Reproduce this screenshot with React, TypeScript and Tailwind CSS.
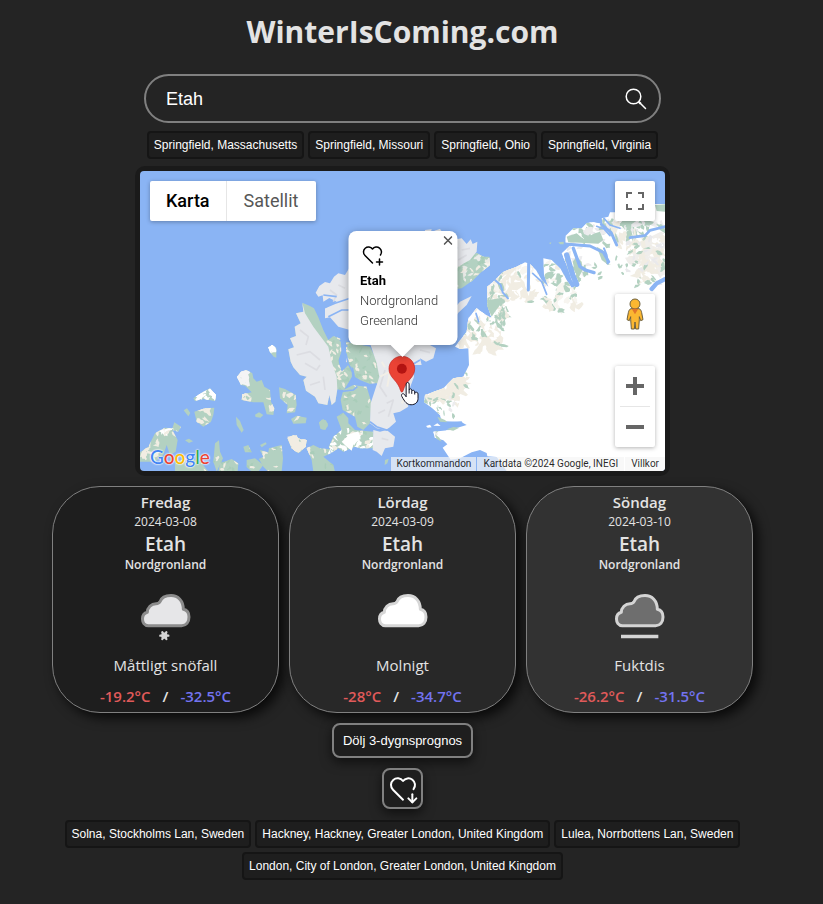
import { useState } from "react";
import type { ReactNode } from "react";
import { TbHeartDown, TbHeartPlus } from "react-icons/tb";

const UI_FONT = "font-['Open_Sans','Noto_Sans',sans-serif]";
const BUTTON_FONT = "font-['Liberation_Sans',Arial,sans-serif]";
const MAP_FONT = "font-['Roboto',sans-serif]";

const suggestions = [
  "Springfield, Massachusetts",
  "Springfield, Missouri",
  "Springfield, Ohio",
  "Springfield, Virginia",
];

const favourites = [
  "Solna, Stockholms Lan, Sweden",
  "Hackney, Hackney, Greater London, United Kingdom",
  "Lulea, Norrbottens Lan, Sweden",
  "London, City of London, Greater London, United Kingdom",
];

type Weather = "snow" | "cloudy" | "mist";

const forecast: {
  day: string;
  date: string;
  weather: Weather;
  text: string;
  max: string;
  min: string;
  background: string;
}[] = [
  { day: "Fredag", date: "2024-03-08", weather: "snow", text: "Måttligt snöfall", max: "-19.2°C", min: "-32.5°C", background: "bg-[#1e1e1e]" },
  { day: "Lördag", date: "2024-03-09", weather: "cloudy", text: "Molnigt", max: "-28°C", min: "-34.7°C", background: "bg-[#282828]" },
  { day: "Söndag", date: "2024-03-10", weather: "mist", text: "Fuktdis", max: "-26.2°C", min: "-31.5°C", background: "bg-[#323232]" },
];

function PlaceButton({ children }: { children: ReactNode }) {
  return (
    <button
      type="button"
      className={`h-7 rounded border-2 border-[#151515] bg-[#1e1e1e] px-[5px] text-xs font-medium whitespace-nowrap text-white ${BUTTON_FONT}`}
    >
      {children}
    </button>
  );
}

const cloudColours = {
  snow: { fill: "#e6e6e8", stroke: "#8c8c8c" },
  cloudy: { fill: "#ffffff", stroke: "#d6d6d6" },
  mist: { fill: "#6e6e6e", stroke: "#d4d4d4" },
};

function WeatherIcon({ weather }: { weather: Weather }) {
  const { fill, stroke } = cloudColours[weather];
  return (
    <svg viewBox="280 309 192 192" className="size-16" aria-hidden="true">
      <path
        d="M323 437C311 437 305.500 427 305.500 417C305.500 406 311 399 320 397C320 383 332 371 346 371C353 371 356 369 358 365C362 354 374 346.500 391 346.500C412 346.500 428 362 428 388C439 390 445 399 445 411C445 427 436 437 423 437Z"
        fill={fill}
        stroke={stroke}
        strokeWidth="9"
        strokeLinejoin="round"
      />
      {weather === "snow" && (
        <g stroke="#d6d6d6" strokeWidth="7" strokeLinecap="round">
          <path d="M359 467h24M365 457l12 20M377 457l-12 20" />
          <circle cx="371" cy="467" r="6" fill="#d6d6d6" />
        </g>
      )}
      {weather === "mist" && <path d="M319 469.500h112" stroke="#d4d4d4" strokeWidth="11" />}
    </svg>
  );
}

/* Coastlines, in a 1575 x 900 space (three units to a map pixel). */
const GREENLAND =
  "M205 550L207 600L190 635L160 640L130 670L75 690L72 712L95 728L120 750L125 768L185 772L200 780L150 795L100 800L104 818L130 826L142 838L128 848L152 884L180 880L215 862L240 855L260 864L262 874L290 876L320 918H800V117H765L740 135L720 125L700 150L655 142L630 142L625 155L605 160L608 176L580 172L560 174L545 190L520 190L497 212L497 235L512 240L485 265L500 300L515 345L530 362L515 368L500 345L482 312L455 285L430 280L432 330L445 365L425 345L408 315L390 297L375 292L350 305L310 320L285 345L262 365L262 420L275 460L250 445L230 430L205 460L200 500L165 545L180 552Z";

const westIslands = [
  "M306 185L318 170L335 165L352 175L355 190L365 200L380 195L388 215L405 225L408 260L418 280L415 300L395 298L385 262L355 262L335 258L320 255L322 238L350 232L330 212L318 210Z",
  "M400 97L412 90L424 100L424 128L416 125L405 112Z",
  "M175 250L205 230L225 220L243 240L240 258L205 252L180 258Z",
  "M178 290L210 280L238 278L235 300L228 320L205 335L185 320Z",
  "M146 286L156 280L166 294L160 304Z",
  "M432 217L450 222L482 240L485 270L480 292L455 295L458 270L435 250Z",
  "M360 299L372 292L385 300L376 308L362 306Z",
  "M303 305L315 318L326 345L320 353L305 330Z",
  "M468 312L485 302L515 308L512 325L475 326Z",
  "M552 322L565 312L579 326L572 344L560 343Z",
  "M10 415L40 395L60 355L90 338L112 340L118 322L138 335L130 350L112 345L128 375L122 410L105 420L95 390L85 420L60 440H10Z",
  "M150 376L162 371L174 379L162 384Z",
  "M240 385L252 376L255 410L264 430L245 470L235 440Z",
  "M255 445L290 432L310 445L308 470H250Z",
  "M325 395L340 390L350 412L330 412Z",
  "M372 432L385 425L375 405L400 412L402 400L440 390L444 430L440 470H400L385 455Z",
  "M335 435L360 430L385 450L370 470H350L335 455Z",
  "M375 390L392 382L395 387L380 397Z",
  "M120 445L160 425L200 445L220 470H120Z",
  "M457 370L475 360L495 372L515 375L512 395L490 415L470 400Z",
];

const centralIslands = [
  "M97 218L120 228L132 235L145 262L160 300L175 330L190 318L212 326L214 365L205 392L215 425L244 395L246 440L222 480L202 478L196 515L185 525L178 495L172 525L145 520L135 500L108 482L100 450L110 440L90 435L70 412L62 395L55 358L72 352L60 325L78 318L74 290L92 280L78 250L100 245Z",
  "M228 335L250 340L300 350L325 400L330 460L300 462L270 450L255 440L250 415L228 395Z",
  "M220 480L250 465L290 470L305 520L300 580L280 600L262 590L255 560L218 540L212 510Z",
  "M200 560L220 548L235 565L235 580L255 600L310 605V655L270 655L255 650L220 665L205 655L185 668L176 650L190 620L215 600Z",
  "M147 578L155 569L168 571L174 588L163 599L151 596Z",
  "M110 655L130 645L150 655L180 658L182 670L160 680L190 705L195 725H130L125 690Z",
  "M558 110L620 68L640 80L658 80L660 105L630 130L610 150L575 175L540 180Z",
  "M345 690L356 686L352 700L344 705Z",
];

const iceFields = [
  "M97 218L105 250L130 290L175 350L185 395L200 440L202 478L196 515L185 525L178 495L172 525L145 520L135 500L108 482L100 450L110 440L90 435L70 412L62 395L55 358L72 352L60 325L78 318L74 290L92 280L78 250L100 245Z",
  "M137 188L148 168L165 156L180 160L192 140L205 130L225 135L240 110V300L205 290L180 262L165 265L165 235L200 215L178 204L160 215L158 196L145 200Z",
  "M300 340H470L498 355L490 385L468 395L450 385L455 405L430 405L432 440L410 500L415 530L390 545L370 550L378 575L350 600L320 595L300 580L302 520L328 440L320 400Z",
  "M540 100L562 55L558 28L575 25L590 42L602 28L608 42L622 35L620 65L600 90L555 115Z",
  "M540 250L570 215L605 198L590 225L565 248L550 270Z",
  "M310 600L330 605L350 600L375 620L370 650L345 655L335 678L320 665L308 660Z",
];

const fjords: [string, number][] = [
  ["M495 237L570 243L610 262L626 290", 9],
  ["M520 250L540 305L556 315L582 323", 10],
  ["M604 178L634 204L650 240", 9],
  ["M755 372L770 355L800 340", 13],
  ["M690 218L735 212L750 196L800 184", 8],
  ["M386 296L385 375", 9],
  ["M398 325L425 350L440 388", 5],
  ["M285 345L302 360L308 382L324 400", 6],
  ["M590 184L612 192L630 212M612 160L630 180L660 190", 5],
  ["M500 270L518 330L530 358", 16],
  ["M612 250L620 270L623 295", 6],
  ["M228 445L236 470", 5],
];

const GREEN = "#b3d1c1";
const CREAM = "#f1ede3";

/* Centre, spread, number of patches and the colours that they take in turn. */
const terrain: { at: [number, number]; spread: [number, number]; count: number; size: number; colours: string[] }[] = [
  { at: [1100, 330], spread: [75, 55], count: 50, size: 24, colours: [CREAM, CREAM, "#f7f5f0"] },
  { at: [1120, 340], spread: [95, 60], count: 34, size: 13, colours: [GREEN, "#ffffff", CREAM] },
  { at: [1070, 390], spread: [35, 55], count: 30, size: 16, colours: [GREEN, GREEN, CREAM] },
  { at: [1265, 345], spread: [55, 75], count: 60, size: 16, colours: [GREEN, CREAM, "#f7f5f0", GREEN] },
  { at: [1305, 270], spread: [40, 45], count: 24, size: 13, colours: [GREEN, "#ececee", "#ffffff"] },
  { at: [1370, 180], spread: [115, 40], count: 50, size: 18, colours: [GREEN, "#e9e9ec", "#ffffff"] },
  { at: [1490, 190], spread: [100, 35], count: 46, size: 18, colours: [GREEN, "#ececee", CREAM, GREEN] },
  { at: [1535, 260], spread: [55, 65], count: 50, size: 24, colours: [CREAM, CREAM, "#f0eeeb"] },
  { at: [1520, 270], spread: [65, 75], count: 46, size: 12, colours: [GREEN, "#ffffff", "#e9e9ec"] },
  { at: [1430, 290], spread: [80, 35], count: 24, size: 9, colours: [GREEN, "#ffffff"] },
  { at: [1010, 470], spread: [65, 70], count: 60, size: 24, colours: [CREAM, CREAM, "#ffffff"] },
  { at: [1035, 450], spread: [60, 75], count: 50, size: 13, colours: [GREEN, GREEN, "#ffffff"] },
  { at: [905, 650], spread: [65, 40], count: 60, size: 24, colours: [CREAM] },
  { at: [905, 650], spread: [75, 50], count: 24, size: 11, colours: [GREEN, "#ffffff"] },
  { at: [890, 740], spread: [55, 60], count: 34, size: 10, colours: [GREEN, "#ececee", "#ffffff"] },
  { at: [650, 540], spread: [90, 90], count: 54, size: 10, colours: [CREAM, "#a9cdb9"] },
  { at: [590, 560], spread: [30, 130], count: 30, size: 10, colours: [CREAM] },
  { at: [640, 690], spread: [80, 130], count: 54, size: 9, colours: [CREAM, "#a9cdb9"] },
  { at: [990, 300], spread: [60, 50], count: 60, size: 11, colours: [CREAM, "#e9ebe8", "#a9cdb9"] },
  { at: [630, 810], spread: [75, 35], count: 50, size: 12, colours: ["#ffffff", CREAM, "#ffffff"] },
  { at: [440, 690], spread: [50, 60], count: 22, size: 13, colours: [CREAM] },
  { at: [470, 810], spread: [40, 30], count: 35, size: 20, colours: [CREAM] },
  { at: [185, 735], spread: [45, 30], count: 14, size: 15, colours: [CREAM] },
  { at: [300, 620], spread: [25, 25], count: 26, size: 16, colours: ["#f4f4f5"] },
  { at: [310, 680], spread: [20, 14], count: 10, size: 14, colours: [CREAM] },
  { at: [200, 675], spread: [30, 14], count: 14, size: 15, colours: ["#ffffff"] },
  { at: [390, 530], spread: [16, 16], count: 14, size: 14, colours: ["#ffffff"] },
  { at: [90, 775], spread: [45, 14], count: 14, size: 13, colours: [CREAM, "#ffffff"] },
  { at: [20, 840], spread: [35, 30], count: 14, size: 13, colours: [CREAM] },
  { at: [350, 865], spread: [240, 40], count: 70, size: 10, colours: [CREAM, "#a9cdb9"] },
];

function buildTerrain() {
  let seed = 4711;
  const random = () => {
    seed = (seed * 16807) % 2147483647;
    return seed / 2147483647;
  };
  return terrain.flatMap(({ at, spread, count, size, colours }) =>
    Array.from({ length: count }, (_, i) => {
      const x = at[0] + (random() * 2 - 1) * spread[0];
      const y = at[1] + (random() * 2 - 1) * spread[1];
      const turn = random() * Math.PI;
      const flatness = 0.3 + random() * 0.35;
      const points = Array.from({ length: 9 }, (_, k) => {
        const angle = (k / 9) * Math.PI * 2;
        const radius = size * (0.4 + random() * 0.8);
        const along = Math.cos(angle) * radius;
        const across = Math.sin(angle) * radius * flatness;
        const px = x + along * Math.cos(turn) - across * Math.sin(turn);
        const py = y + along * Math.sin(turn) + across * Math.cos(turn);
        return `${Math.round(px)},${Math.round(py)}`;
      }).join(" ");
      return { points, fill: colours[i % colours.length] };
    }),
  );
}

const patches = buildTerrain();

function MapDrawing() {
  return (
    <svg
      viewBox="0 0 1575 900"
      preserveAspectRatio="xMidYMid slice"
      className="absolute inset-0 size-full"
      role="img"
      aria-label="Karta över nordvästra Grönland"
    >
      <defs>
        <clipPath id="land">
          <path d={GREENLAND} transform="translate(780 -18)" />
          {westIslands.map((d) => (
            <path key={d} d={d} transform="translate(-15 432)" />
          ))}
          {centralIslands.map((d) => (
            <path key={d} d={d} transform="translate(390 177)" />
          ))}
        </clipPath>
      </defs>
      <rect width="1575" height="900" fill="#8ab4f4" />
      <path d={GREENLAND} transform="translate(780 -18)" fill="#ffffff" />
      <g transform="translate(-15 432)" fill={GREEN}>
        {westIslands.map((d) => (
          <path key={d} d={d} />
        ))}
      </g>
      <g transform="translate(390 177)" fill={GREEN}>
        {centralIslands.map((d) => (
          <path key={d} d={d} />
        ))}
      </g>
      <g clipPath="url(#land)">
        {patches.map(({ points, fill }, i) => (
          <polygon key={i} points={points} fill={fill} />
        ))}
      </g>
      <g transform="translate(390 177)">
        <g fill="#e7e9ed">
          {iceFields.map((d) => (
            <path key={d} d={d} />
          ))}
          <path d="M215 635L240 612L265 604L272 625L250 645L245 662L230 650Z" fill="#ffffff" />
          <path d="M52 620L80 615L90 640L86 668L66 655Z" fill={CREAM} />
        </g>
        <g fill="none" stroke="#dcdde2" strokeWidth="5" strokeLinejoin="round">
          <path d="M90 300L115 320L108 345M80 375L120 365L150 390M105 400L140 420L150 405M160 440L165 480M120 465L150 455M345 420L330 470L350 500M350 520L370 510L355 560M325 550L345 540M180 180L200 195L190 215M205 165L225 175M380 365L400 380M450 360L480 368" />
          <path d="M575 60L600 55M565 90L590 75M335 625L355 630" />
        </g>
        <g fill="none" stroke="#f2efe7" strokeWidth="6">
          <path d="M330 440L360 425L352 470M335 395L345 412M395 520L405 505" />
        </g>
        <g fill="none" stroke="#8ab4f4" strokeWidth="5">
          <path d="M160 235L195 220L240 205M175 260L215 240L240 240M228 370L234 400L250 430L246 460L280 466L320 462M210 330L232 350M300 575L320 590L350 600L375 590M262 470L250 480L215 484M425 405L450 390M160 195L200 200" />
        </g>
      </g>
      <g transform="translate(780 -18)">
        <g fill="#e6e7ea">
          <path d="M75 195L95 193L93 200H75ZM103 197L120 192L126 200H105Z" />
          <path d="M502 262L512 258L508 310L500 300Z" />
        </g>
        <path d="M262 405L285 402L305 398L315 410L300 420L285 440L275 455L262 425Z" fill={GREEN} />
        <path d="M530 275L545 290L548 315L535 340L525 320L518 290Z" fill={GREEN} />
        <path d="M500 215L530 205L550 222L585 205L600 200L610 225L595 236L540 233L505 232Z" fill={GREEN} />
        <path d="M590 245L608 255L625 300L605 285Z" fill={GREEN} />
        <path d="M765 120L795 118V140L770 138Z" fill={GREEN} />
        <path d="M475 232L490 230L494 238H480ZM447 234L454 232L452 238Z" fill={GREEN} />
        <path d="M555 190L575 186L580 205L560 210Z" fill="#ececed" />
        <g fill="none" stroke="#8ab4f4" strokeLinejoin="round" strokeLinecap="round">
          {fjords.map(([d, width]) => (
            <path key={d} d={d} strokeWidth={width} />
          ))}
        </g>
      </g>
      <g transform="translate(780 432)">
        <path d="M78 333L90 329L95 337L83 338ZM100 332L112 325L122 333Z" fill="#ffffff" />
        <path d="M125 322L185 319L190 330L150 338L140 334Z" fill="#8ab4f4" />
        <path d="M112 305L135 315L142 322L120 320ZM140 343L160 336L178 338L160 347ZM105 358L118 368L125 380L110 372Z" fill={GREEN} />
      </g>
    </svg>
  );
}

function Pegman() {
  return (
    <svg viewBox="0 0 54 96" className="h-8 w-[18px]" aria-hidden="true">
      <g fill="#fbb731" stroke="#6b5f3f" strokeWidth="3">
        <path d="M15 32H39C43 33 46 38 47 44L51 65L44 68L40 56V64L38 93H29L27 72L25 93H16L14 64V56L10 68L3 65L7 44C8 38 11 33 15 32Z" />
        <circle cx="27" cy="18" r="15" />
      </g>
      <path d="M17 32H37L27 49Z" fill="#e0752b" />
    </svg>
  );
}

function MapMarker() {
  return (
    <svg viewBox="354 375 100 156" className="block h-[52px] w-[33px]" aria-hidden="true">
      <path
        d="M396 378C374 378 357 395 357 416C357 429 363 438 371 447C383 460 389 471 392 482C393 488 399 488 400 482C403 471 409 460 421 447C429 438 435 429 435 416C435 395 418 378 396 378Z"
        fill="#ea4335"
        stroke="#c5221f"
        strokeWidth="2"
      />
      <circle cx="396" cy="416" r="15" fill="#b31412" />
      <path
        d="M409 496V462C409 456 418 456 418 462V480C419 475 426 476 426 481V484C428 479 435 481 435 486V489C438 485 445 487 445 492V506C445 517 437 525 424 525C411 525 405 516 396 500C392 492 400 489 404 494L409 501Z"
        fill="#ffffff"
        stroke="#111122"
        strokeWidth="3"
        strokeLinejoin="round"
      />
      <path d="M418 480V491M426 484V492M435 488V494" stroke="#111122" strokeWidth="3" />
    </svg>
  );
}

const controlBox = "bg-white shadow-[0_1px_4px_rgba(0,0,0,0.3)]";

function GoogleLogo() {
  return (
    <a
      href="#google"
      aria-label="Google"
      className="font-['Lato',sans-serif] text-[19px] leading-6 font-medium [text-shadow:0_0_2px_#fff,0_0_2px_#fff,0_0_1px_#fff]"
    >
      <span className="text-[#4285f4]">G</span>
      <span className="text-[#ea4335]">o</span>
      <span className="text-[#fbbc05]">o</span>
      <span className="text-[#4285f4]">g</span>
      <span className="text-[#34a853]">l</span>
      <span className="text-[#ea4335]">e</span>
    </a>
  );
}

function MapPanel() {
  return (
    <section className="mt-[7px] w-full max-w-[535px] rounded-[10px] bg-[#1a1a1a] p-[5px]" aria-label="Karta">
      <div className={`relative h-[300px] overflow-hidden rounded-[4px] ${MAP_FONT}`}>
        <MapDrawing />

        <div className={`absolute top-[10px] left-[10px] flex h-10 rounded-[2px] text-lg ${controlBox}`}>
          <button type="button" className="border-r border-[#e6e6e6] px-4 font-medium text-black">
            Karta
          </button>
          <button type="button" className="px-[17px] text-[#565656]">
            Satellit
          </button>
        </div>

        <button
          type="button"
          aria-label="Växla till helskärm"
          className={`absolute top-[10px] right-[10px] flex size-10 items-center justify-center rounded-[2px] ${controlBox}`}
        >
          <svg viewBox="0 0 18 18" className="size-[18px]" fill="#666666" aria-hidden="true">
            <path d="M0 0v6h2V2h4V0H0zm16 0h-4v2h4v4h2V0h-2zm0 16h-4v2h6v-6h-2v4zM2 12H0v6h6v-2H2v-4z" />
          </svg>
        </button>

        <div className="absolute right-[10px] bottom-6 flex w-10 flex-col gap-8">
          <button type="button" aria-label="Street View" className={`flex h-10 items-center justify-center rounded-[2px] ${controlBox}`}>
            <Pegman />
          </button>
          <div className={`flex flex-col items-center rounded-[2px] ${controlBox}`}>
            <button type="button" aria-label="Zooma in" className="flex size-10 items-center justify-center">
              <svg viewBox="0 0 18 18" className="size-[18px]" fill="#666666" aria-hidden="true">
                <path d="M18 7h-7V0H7v7H0v4h7v7h4v-7h7z" />
              </svg>
            </button>
            <span className="h-px w-[30px] bg-[#e6e6e6]" />
            <button type="button" aria-label="Zooma ut" className="flex size-10 items-center justify-center">
              <svg viewBox="0 0 18 18" className="size-[18px]" fill="#666666" aria-hidden="true">
                <path d="M0 7h18v4H0V7z" />
              </svg>
            </button>
          </div>
        </div>

        <div className="absolute top-[184px] left-1/2 -ml-[15px]">
          <MapMarker />
        </div>

        <div className="absolute top-[60px] left-1/2 w-[109px] -translate-x-1/2 drop-shadow-[0_2px_4px_rgba(0,0,0,0.35)]">
          <div className="h-[114px] rounded-lg bg-white px-3 pt-3 text-[13px] leading-5 font-light text-[#333333]">
            <button type="button" aria-label="Spara som favorit" className="mb-1 block text-black">
              <TbHeartPlus className="size-6 [stroke-width:1.5]" />
            </button>
            <p className="font-bold text-black">Etah</p>
            <p>Nordgronland</p>
            <p>Greenland</p>
          </div>
          <button type="button" aria-label="Stäng" className="absolute top-[4px] right-[4px] p-px">
            <svg viewBox="0 0 9 9" className="size-[9px]" stroke="#555555" strokeWidth="1.500" aria-hidden="true">
              <path d="M0.500 0.500l8 8M8.500 0.500l-8 8" />
            </svg>
          </button>
          <svg viewBox="0 0 24 12" className="mx-auto block h-3 w-6" aria-hidden="true">
            <path d="M0 0h24L12 12z" fill="#ffffff" />
          </svg>
        </div>

        <div className="absolute bottom-0 left-[10px]">
          <GoogleLogo />
        </div>

        <div className="absolute right-0 bottom-0 flex h-[14px] gap-px text-[10px] leading-[14px] text-black/85">
          <button type="button" className="bg-[#f5f5f5]/70 px-[5px]">
            Kortkommandon
          </button>
          <span className="bg-[#f5f5f5]/70 px-[6px]">Kartdata ©2024 Google, INEGI</span>
          <a href="#villkor" className="bg-[#f5f5f5]/70 px-[6px]">
            Villkor
          </a>
        </div>
      </div>
    </section>
  );
}

export default function App() {
  const [query, setQuery] = useState("Etah");
  return (
    <main className={`flex min-h-screen flex-col items-center bg-[#242424] pr-[18px] text-[#e3e3e3] ${UI_FONT}`}>
      <h1 className="pt-2 text-[30px] leading-[48px] font-bold">WinterIsComing.com</h1>

      <form
        role="search"
        onSubmit={(event) => event.preventDefault()}
        className="mt-[18px] flex h-[49px] w-full max-w-[517px] items-center rounded-full border-2 border-[#808080] pr-3 pl-5"
      >
        <input
          type="text"
          aria-label="Sök ort"
          value={query}
          onChange={(event) => setQuery(event.target.value)}
          className={`min-w-0 flex-1 bg-transparent text-lg text-white outline-none ${BUTTON_FONT}`}
        />
        <button type="submit" aria-label="Sök" className="text-white">
          <svg viewBox="0 0 22 22" className="size-[22px]" fill="none" stroke="currentColor" aria-hidden="true">
            <circle cx="8.500" cy="8.500" r="7.300" strokeWidth="1.500" />
            <path d="M13.700 13.700l2 2" strokeWidth="2.200" />
            <path d="M15 15l5.500 5.500" strokeWidth="1.500" strokeLinecap="round" />
          </svg>
        </button>
      </form>

      <div className="mt-2 flex flex-wrap justify-center gap-1">
        {suggestions.map((place) => (
          <PlaceButton key={place}>{place}</PlaceButton>
        ))}
      </div>

      <MapPanel />

      <div className="mt-[10px] grid w-full max-w-[701px] grid-cols-3 gap-[10px]">
        {forecast.map((item) => (
          <article
            key={item.day}
            className={`flex flex-col items-center rounded-[48px] border border-[#808080] pt-1 pb-[6px] shadow-[5px_5px_12px_rgba(0,0,0,0.75)] ${item.background}`}
          >
            <h2 className="text-[15px] leading-[22px] font-semibold">{item.day}</h2>
            <time className="text-[12px] leading-[18px]">{item.date}</time>
            <p className="text-[19px] leading-[26px] font-semibold">Etah</p>
            <p className="text-[12px] leading-4 font-semibold">Nordgronland</p>
            <div className="pt-[10px] pb-2">
              <WeatherIcon weather={item.weather} />
            </div>
            <p className="text-[15px] leading-5">{item.text}</p>
            <p className="mt-[11px] flex gap-3 text-[15px] leading-5 font-semibold">
              <span className="text-[#e05a5a]">{item.max}</span>
              <span>/</span>
              <span className="text-[#7373f0]">{item.min}</span>
            </p>
          </article>
        ))}
      </div>

      <button
        type="button"
        className={`mt-[10px] h-[35px] rounded-lg border-2 border-[#808080] bg-[#1e1e1e] px-[9px] text-[13px] font-medium text-white shadow-[0_4px_12px_rgba(0,0,0,0.6)] ${BUTTON_FONT}`}
      >
        Dölj 3-dygnsprognos
      </button>

      <button
        type="button"
        aria-label="Visa favoriter"
        className="mt-[10px] flex size-[41px] items-center justify-center rounded-lg border-2 border-[#808080] bg-[#1e1e1e] text-white shadow-[0_4px_12px_rgba(0,0,0,0.6)]"
      >
        <TbHeartDown className="size-8 [stroke-width:1.5]" />
      </button>

      <div className="mt-[11px] flex max-w-[701px] flex-wrap justify-center gap-1 pb-6">
        {favourites.map((place) => (
          <PlaceButton key={place}>{place}</PlaceButton>
        ))}
      </div>
    </main>
  );
}
